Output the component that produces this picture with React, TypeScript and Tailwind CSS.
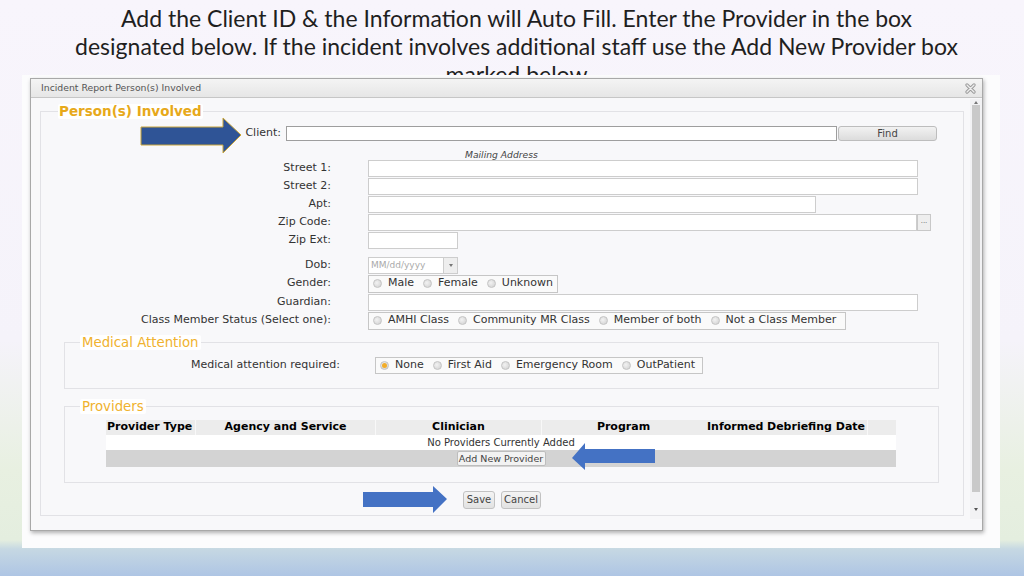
import React from "react";

const Radio = ({ on }: { on?: boolean }) => (
  <span className="inline-flex w-[9px] h-[9px] rounded-full border border-[#c4c4c4] bg-[radial-gradient(circle_at_40%_40%,#f2f2f2,#cfcfcf)] items-center justify-center shrink-0">
    {on && <span className="w-[5px] h-[5px] rounded-full bg-[#f2ad2a]" />}
  </span>
);

const Opt = ({ label, on, first }: { label: string; on?: boolean; first?: boolean }) => (
  <span className={"flex items-center gap-[6px] " + (first ? "" : "ml-[9px]")}>
    <Radio on={on} />
    <span>{label}</span>
  </span>
);

const Input = ({ w }: { w: string }) => (
  <div className={"h-[17px] bg-white border border-[#cdcdcd] " + w} />
);

const Row = ({ label, children, cls }: { label: string; children: React.ReactNode; cls?: string }) => (
  <div className={"flex items-center " + (cls || "")}>
    <div className="w-[290px] text-right">{label}</div>
    <div className="ml-[37px] flex">{children}</div>
  </div>
);

const Btn = ({ label, w }: { label: string; w: string }) => (
  <div className={"h-[18px] rounded-[3px] border border-[#c2c2c2] bg-[linear-gradient(#f4f4f4,#e2e2e2)] text-[10px] text-[#444] flex items-center justify-center " + w}>
    {label}
  </div>
);

export default function App() {
  return (
    <div className="relative w-[1024px] h-[576px] overflow-hidden bg-[linear-gradient(to_bottom,#f8f5fc_0px,#f5f3fa_340px,#e8f0e1_470px,#e4eedf_540px,#c6d8e3_549px,#aec5e4_576px)] font-['DejaVu_Sans',sans-serif] text-[11px] text-[#333]">
      <div className="h-[75px] overflow-hidden pt-[4px] pl-[9px] text-center font-['Lato',sans-serif] text-[23px] leading-[28px] text-[#1f1f1f]">
        <div>Add the Client ID &amp; the Information will Auto Fill. Enter the Provider in the box</div>
        <div>designated below. If the incident involves additional staff use the Add New Provider box</div>
        <div>marked below</div>
      </div>

      <div className="ml-[22px] w-[978px] h-[473px] bg-[#fcfcfd] pt-[3px] pl-[8px]">
        <div className="w-[953px] h-[453px] border border-[#a8a8a8] bg-[#f8f8fa] shadow-[1px_2px_4px_rgba(0,0,0,0.3)] flex flex-col">
          <div className="h-[19px] shrink-0 border-b border-[#c6c6c6] bg-[linear-gradient(#f4f4f4,#e6e6e6)] flex items-center justify-between pl-[10px] pr-[6px]">
            <span className="text-[9.3px] text-[#555]">Incident Report Person(s) Involved</span>
            <svg width="11" height="11" viewBox="0 0 11 11">
              <path d="M2 2 L9 9 M9 2 L2 9" stroke="#9a9a9a" strokeWidth="3.2" strokeLinecap="round" />
              <path d="M2 2 L9 9 M9 2 L2 9" stroke="#ededed" strokeWidth="1.4" strokeLinecap="round" />
            </svg>
          </div>

          <div className="flex flex-1">
            <div className="pl-[9px] pt-[6px]">
              <fieldset className="w-[924px] h-[412px] border border-[#e2e2e6] flex flex-col">
                <legend className="ml-[17px] px-[1px] bg-white rounded-[2px] text-[13.5px] leading-[15px] font-bold text-[#e7a91a]">
                  Person(s) Involved
                </legend>

                <div className="flex items-center mt-[6px]">
                  <div className="w-[240px] text-right">Client:</div>
                  <div className="ml-[5px] w-[551px] h-[15px] bg-white border border-[#9e9e9e]" />
                  <div className="ml-[1px] w-[99px] h-[15px] rounded-[3px] border border-[#bdbdbd] bg-[linear-gradient(#f2f2f2,#dcdcdc)] text-[10px] text-[#444] flex items-center justify-center">
                    Find
                  </div>
                </div>

                <div className="mt-[7px] h-[11px] leading-[11px] text-[9.2px] italic text-[#444] pl-[424px]">Mailing Address</div>

                <Row label="Street 1:"><Input w="w-[550px]" /></Row>
                <Row label="Street 2:" cls="mt-[1px]"><Input w="w-[550px]" /></Row>
                <Row label="Apt:" cls="mt-[1px]"><Input w="w-[448px]" /></Row>
                <Row label="Zip Code:" cls="mt-[1px]">
                  <Input w="w-[549px]" />
                  <div className="w-[14px] h-[17px] border border-[#c8c8c8] bg-[#eeeeee] text-[7px] leading-[12px] text-center text-[#666]">...</div>
                </Row>
                <Row label="Zip Ext:" cls="mt-[1px]"><Input w="w-[90px]" /></Row>

                <Row label="Dob:" cls="mt-[8px]">
                  <div className="w-[76px] h-[17px] bg-white border border-[#cdcdcd] text-[9px] text-[#aaa] pl-[2px] leading-[15px]">MM/dd/yyyy</div>
                  <div className="w-[14px] h-[17px] border border-l-0 border-[#cdcdcd] bg-[#eeeeee] flex items-center justify-center">
                    <span className="block w-0 h-0 border-x-[2.5px] border-x-transparent border-t-[3px] border-t-[#777]" />
                  </div>
                </Row>
                <Row label="Gender:" cls="mt-[1px]">
                  <div className="w-[190px] h-[18px] border border-[#c6c6c6] bg-[#fafafa] flex items-center pl-[4px]">
                    <Opt label="Male" first />
                    <Opt label="Female" />
                    <Opt label="Unknown" />
                  </div>
                </Row>
                <Row label="Guardian:" cls="mt-[1px]"><Input w="w-[550px]" /></Row>
                <Row label="Class Member Status (Select one):" cls="mt-[1px]">
                  <div className="w-[478px] h-[18px] border border-[#c6c6c6] bg-[#fafafa] flex items-center pl-[4px]">
                    <Opt label="AMHI Class" first />
                    <Opt label="Community MR Class" />
                    <Opt label="Member of both" />
                    <Opt label="Not a Class Member" />
                  </div>
                </Row>

                <fieldset className="mt-[5px] ml-[23px] w-[875px] border border-[#e2e2e6] pb-[14px]">
                  <legend className="ml-[15px] px-[2px] bg-white rounded-[2px] text-[13.3px] leading-[15px] text-[#f0b22e]">
                    Medical Attention
                  </legend>
                  <div className="flex items-center mt-[7px]">
                    <div className="w-[275px] text-right">Medical attention required:</div>
                    <div className="ml-[35px] w-[328px] h-[17px] border border-[#c6c6c6] bg-[#fafafa] flex items-center pl-[4px]">
                      <Opt label="None" on first />
                      <Opt label="First Aid" />
                      <Opt label="Emergency Room" />
                      <Opt label="OutPatient" />
                    </div>
                  </div>
                </fieldset>

                <fieldset className="mt-[10px] ml-[23px] w-[875px] border border-[#e2e2e6] pb-[15px]">
                  <legend className="ml-[15px] px-[2px] bg-white rounded-[2px] text-[13.3px] leading-[15px] text-[#f0b22e]">
                    Providers
                  </legend>
                  <div className="ml-[41px] mt-[6px] w-[790px] text-[10px]">
                    <div className="flex h-[15px] items-center bg-[#ececec] font-bold text-[11px] text-black">
                      <div className="w-[89px] pl-[1px]">Provider Type</div>
                      <div className="w-[180px] text-center border-l border-[#f8f8f8]">Agency and Service</div>
                      <div className="w-[166px] text-center border-l border-[#f8f8f8]">Clinician</div>
                      <div className="w-[164px] text-center border-l border-[#f8f8f8]">Program</div>
                      <div className="w-[62px] pl-[2px]">Informed</div>
                      <div className="w-[100px] whitespace-nowrap">Debriefing Date</div>
                      <div className="flex-1 border-l border-[#f8f8f8] h-full" />
                    </div>
                    <div className="h-[15px] bg-white text-center leading-[15px]">No Providers Currently Added</div>
                    <div className="h-[17px] bg-[#d3d3d3] flex items-center justify-center">
                      <div className="w-[89px] h-[15px] rounded-[2px] border border-[#bdbdbd] bg-[#f2f2f2] text-[9.5px] leading-[13px] text-center text-[#444]">
                        Add New Provider
                      </div>
                    </div>
                  </div>
                </fieldset>

                <div className="mt-[8px] flex justify-center gap-[6px]">
                  <Btn label="Save" w="w-[32px]" />
                  <Btn label="Cancel" w="w-[40px]" />
                </div>
              </fieldset>
            </div>

            <div className="ml-[6px] mt-[1px] w-[12px] h-[420px] bg-[#f2f2f4] flex flex-col items-center">
              <span className="mt-[2px] block w-0 h-0 border-x-[2.5px] border-x-transparent border-b-[3px] border-b-[#777]" />
              <div className="mt-[1px] w-[8px] h-[387px] bg-[#c9c9c9]" />
              <span className="mt-[16px] block w-0 h-0 border-x-[2.5px] border-x-transparent border-t-[3px] border-t-[#555]" />
            </div>
          </div>
        </div>
      </div>

      {/* annotation arrows */}
      <svg className="absolute left-0 top-0" width="1024" height="576" viewBox="0 0 1024 576">
        <path d="M141 127 L223 127 L223 118 L241 135 L223 153 L223 145 L141 145 Z" fill="#2f5496" stroke="#c9a53a" strokeWidth="1" />
        <path d="M572 458 L585 443 L585 449 L655 449 L655 463 L585 463 L585 470 Z" fill="#4472c4" />
        <path d="M363 492 L433 492 L433 486 L447 499 L433 513 L433 507 L363 507 Z" fill="#4472c4" />
      </svg>
    </div>
  );
}
